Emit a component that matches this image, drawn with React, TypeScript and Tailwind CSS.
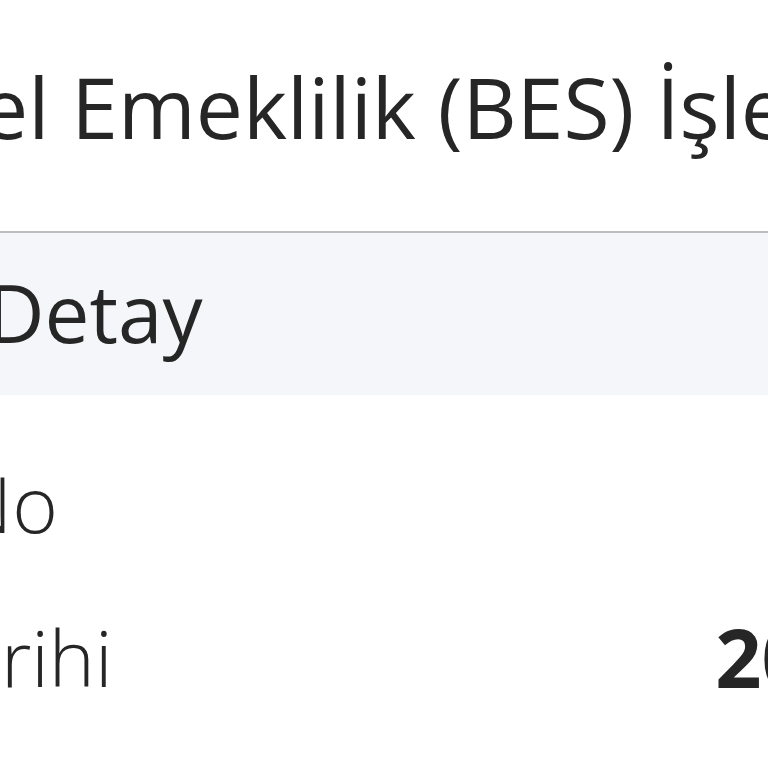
import React from "react";

const rows = [
  { label: "Sözleşme No", value: "1234567" },
  { label: "Yürürlük Tarihi", value: "20.03.2015" },
];

export default function App() {
  return (
    <div className="w-[768px] h-[768px] overflow-hidden bg-white text-[#262626] font-['Open_Sans',sans-serif]">
      <div className="ml-[-600px] w-[1732px]">
        {/* Page title */}
        <div className="h-[231px] pl-[342px] pt-[65px]">
          <h1 className="text-[84px] leading-[84px] font-normal whitespace-nowrap">
            Bireysel Emeklilik (BES) İşlemleri
          </h1>
        </div>

        {/* Detail table */}
        <div className="border-t-2 border-[#bdbdbd]">
          <div className="h-[162px] bg-[#f5f6f9] pl-[214px] pt-[39px]">
            <span className="text-[80px] leading-[80px] font-medium whitespace-nowrap">
              Sözleşme Detay
            </span>
          </div>
          {rows.map((r) => (
            <div
              key={r.label}
              className="h-[154px] pl-[203px] pt-[69px] flex justify-between items-start"
            >
              <span className="text-[78px] leading-[78px] font-light whitespace-nowrap">
                {r.label}
              </span>
              <span className="text-[81px] leading-[78px] font-bold whitespace-nowrap">
                {r.value}
              </span>
            </div>
          ))}
        </div>
      </div>
    </div>
  );
}
